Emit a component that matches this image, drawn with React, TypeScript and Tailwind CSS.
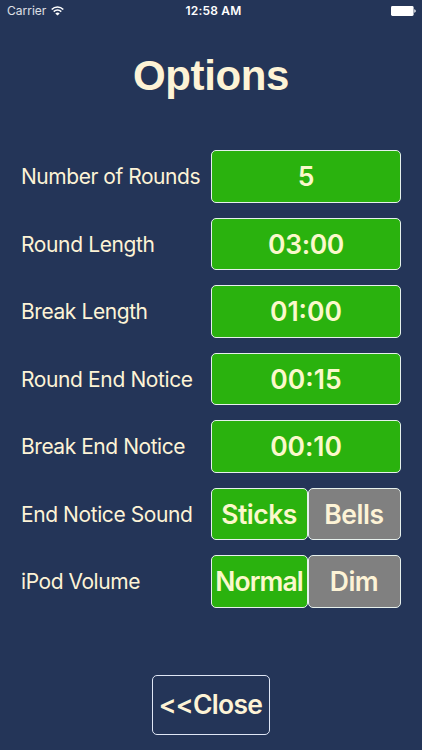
import clsx from "clsx";

type Option = {
  label: string;
  labelClass: string;
  choices: { text: string; active: boolean; className: string }[];
};

const OPTIONS: Option[] = [
  {
    label: "Number of Rounds",
    labelClass: "tracking-[-0.46px]",
    choices: [{ text: "5", active: true, className: "w-full" }],
  },
  {
    label: "Round Length",
    labelClass: "tracking-[-0.37px]",
    choices: [{ text: "03:00", active: true, className: "w-full tracking-[-0.4px]" }],
  },
  {
    label: "Break Length",
    labelClass: "tracking-[-0.42px]",
    choices: [{ text: "01:00", active: true, className: "w-full" }],
  },
  {
    label: "Round End Notice",
    labelClass: "tracking-[-0.38px]",
    choices: [{ text: "00:15", active: true, className: "w-full" }],
  },
  {
    label: "Break End Notice",
    labelClass: "tracking-[-0.46px]",
    choices: [{ text: "00:10", active: true, className: "w-full tracking-[-0.1px]" }],
  },
  {
    label: "End Notice Sound",
    labelClass: "tracking-[-0.42px]",
    choices: [
      { text: "Sticks", active: true, className: "w-[97px] pr-px tracking-[-0.5px]" },
      { text: "Bells", active: false, className: "w-[93px] pr-px tracking-[-0.4px]" },
    ],
  },
  {
    label: "iPod Volume",
    labelClass: "tracking-[-0.45px]",
    choices: [
      { text: "Normal", active: true, className: "w-[97px] pr-px tracking-[-0.9px]" },
      { text: "Dim", active: false, className: "w-[93px] pr-px tracking-[-0.5px]" },
    ],
  },
];

// ─── Status bar ───────────────────────────────────────────────────────────────
function StatusBar() {
  return (
    <div className="grid h-[22px] grid-cols-3 items-center pl-[7px] pr-[6px] text-white">
      <div className="flex items-center gap-[5px]">
        <span className="text-[12px] leading-none text-white/85">Carrier</span>
        <svg width="13" height="10" viewBox="0 0 13 10" fill="none" aria-hidden="true">
          <path d="M0.7 3.5C4 0.2 9 0.2 12.3 3.5" stroke="currentColor" strokeWidth="1.6" />
          <path d="M2.7 5.7C5 3.6 8 3.6 10.3 5.7" stroke="currentColor" strokeWidth="1.6" />
          <path d="M4.3 7.4C5.6 6.2 7.4 6.2 8.7 7.4L6.5 9.6Z" fill="currentColor" />
        </svg>
      </div>
      <span className="pl-1 text-center text-[12px] font-semibold leading-none tracking-[0.2px]">12:58 AM</span>
      <svg className="justify-self-end" width="25" height="10" viewBox="0 0 25 10" aria-hidden="true">
        <rect width="22.6" height="10" rx="1.4" fill="currentColor" />
        <path d="M23.3 3.2C25.2 3.8 25.2 6.2 23.3 6.8Z" fill="currentColor" />
      </svg>
    </div>
  );
}

// ─── One row: label on the left, value buttons on the right ──────────────────
function OptionRow({ option }: { option: Option }) {
  return (
    <div className="flex h-[52.5px] items-center justify-between">
      <span className={clsx("whitespace-nowrap pt-px text-[21px] leading-none", option.labelClass)}>
        {option.label}
      </span>
      <div className="flex h-full w-[190px] shrink-0">
        {option.choices.map((choice) => (
          <button
            key={choice.text}
            className={clsx(
              "flex items-center justify-center whitespace-nowrap rounded-[5px] border border-[#e6f0ec] pt-[0.5px] text-[26.5px] font-[580] leading-none",
              choice.active ? "bg-[#2ab20e] text-[#fbf8cb]" : "bg-[#808080] text-[#fdf3d6]",
              choice.className,
            )}
          >
            {choice.text}
          </button>
        ))}
      </div>
    </div>
  );
}

export default function App() {
  return (
    <main className="flex h-[750px] w-[422px] flex-col overflow-hidden bg-[#243558] font-['Inter',sans-serif] text-[#fdf3d6]">
      <StatusBar />
      <h1 className="mt-[30px] text-center font-['Liberation_Sans',sans-serif] text-[42px] font-bold leading-[48px] tracking-[-0.4px]">
        Options
      </h1>
      <div className="mt-[50px] flex flex-col gap-[15px] pl-[21px] pr-[21px]">
        {OPTIONS.map((option) => (
          <OptionRow key={option.label} option={option} />
        ))}
      </div>
      <button className="mt-[67px] flex h-[60px] w-[118px] items-center justify-center self-center rounded-[5px] border border-[#dfe6f5] pr-px text-[26.5px] font-[580] leading-none tracking-[-0.7px]">
        &lt;&lt;Close
      </button>
    </main>
  );
}
